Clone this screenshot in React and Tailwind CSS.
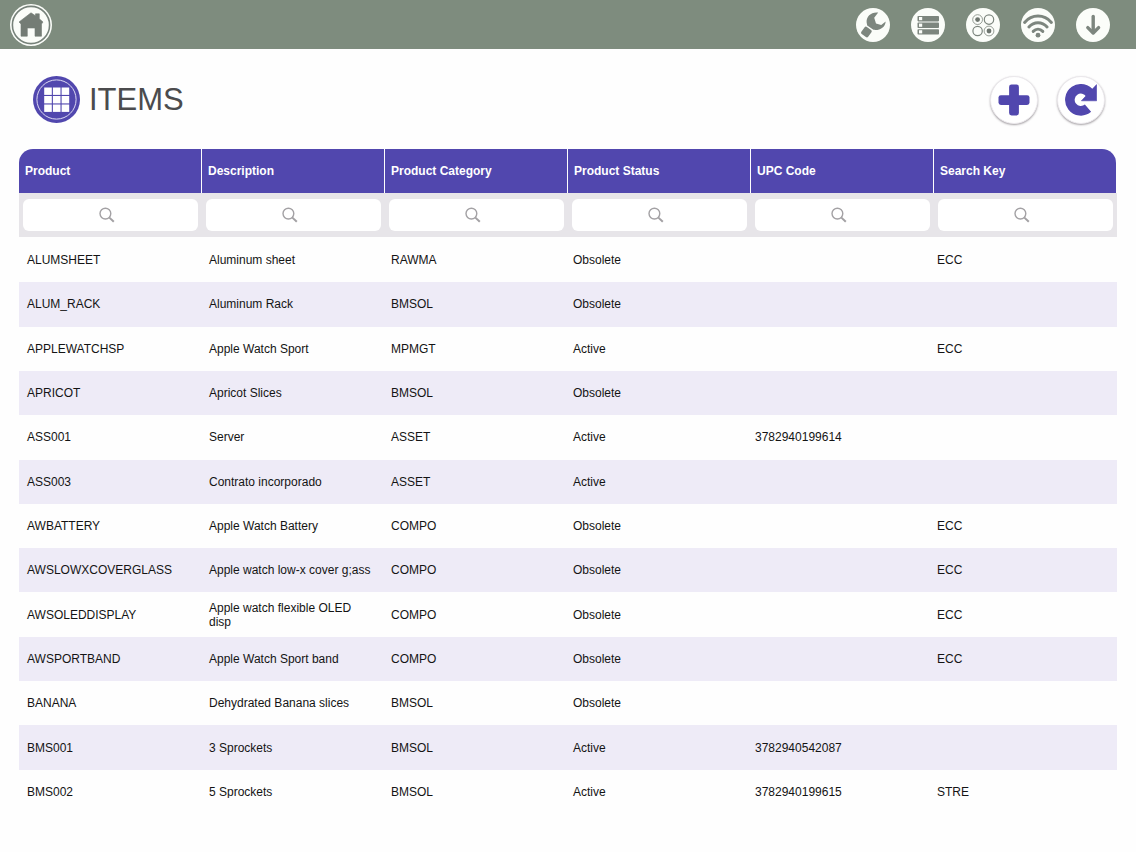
import React, { useState } from "react";

const columns = ["Product", "Description", "Product Category", "Product Status", "UPC Code", "Search Key"];

const items = [
  ["ALUMSHEET", "Aluminum sheet", "RAWMA", "Obsolete", "", "ECC"],
  ["ALUM_RACK", "Aluminum Rack", "BMSOL", "Obsolete", "", ""],
  ["APPLEWATCHSP", "Apple Watch Sport", "MPMGT", "Active", "", "ECC"],
  ["APRICOT", "Apricot Slices", "BMSOL", "Obsolete", "", ""],
  ["ASS001", "Server", "ASSET", "Active", "3782940199614", ""],
  ["ASS003", "Contrato incorporado", "ASSET", "Active", "", ""],
  ["AWBATTERY", "Apple Watch Battery", "COMPO", "Obsolete", "", "ECC"],
  ["AWSLOWXCOVERGLASS", "Apple watch low-x cover g;ass", "COMPO", "Obsolete", "", "ECC"],
  ["AWSOLEDDISPLAY", "Apple watch flexible OLED disp", "COMPO", "Obsolete", "", "ECC"],
  ["AWSPORTBAND", "Apple Watch Sport band", "COMPO", "Obsolete", "", "ECC"],
  ["BANANA", "Dehydrated Banana slices", "BMSOL", "Obsolete", "", ""],
  ["BMS001", "3 Sprockets", "BMSOL", "Active", "3782940542087", ""],
  ["BMS002", "5 Sprockets", "BMSOL", "Active", "3782940199615", "STRE"],
];

function HomeIcon() {
  return (
    <svg viewBox="0 0 42 42" className="size-[42px]" aria-hidden="true">
      <circle cx="21" cy="21" r="21" fill="#fbfdf9" />
      <circle cx="21" cy="21" r="18.6" fill="none" stroke="#77827a" strokeWidth="1.6" />
      <path
        d="M21 8.8 L25.5 11.8 V9.8 H29.3 V14.8 L33 18 L31.5 20 V32.2 H25 V24 H17.3 V32.2 H11 V20 L9 18 Z"
        fill="#747c75"
        stroke="#747c75"
        strokeLinejoin="round"
        strokeWidth="0.6"
      />
    </svg>
  );
}

function WrenchIcon() {
  return (
    <svg viewBox="0 0 34 34" className="size-[34px]" aria-hidden="true">
      <circle cx="17" cy="17" r="17" fill="#fbfdf9" />
      <g fill="#7d867e">
        <path d="M22.2 4.6 C15.5 3.6 10.2 8.3 10.6 14.2 L11.2 17.6 L17.4 21.8 C23.8 22.6 29 19.6 29.7 13.4 L25.2 17 L20 15.4 L18.2 9.8 Z" />
        <rect x="6.2" y="19.6" width="8.4" height="8.8" rx="1.6" transform="rotate(36 10.4 24)" />
      </g>
    </svg>
  );
}

function ServerIcon() {
  return (
    <svg viewBox="0 0 34 34" className="size-[34px]" aria-hidden="true">
      <circle cx="17" cy="17" r="17" fill="#fbfdf9" />
      {[8, 14.6, 21.2].map((y) => (
        <g key={y}>
          <rect x="6.5" y={y} width="21.5" height="5.4" rx="0.8" fill="#7d867e" />
          <rect x="8" y={y + 1} width="3.2" height="3.2" fill="#fbfdf9" />
        </g>
      ))}
    </svg>
  );
}

function ModulesIcon() {
  return (
    <svg viewBox="0 0 34 34" className="size-[34px]" aria-hidden="true">
      <circle cx="17" cy="17" r="17" fill="#fbfdf9" />
      <g fill="none" stroke="#7d867e">
        <circle cx="11.6" cy="11.6" r="4.9" strokeWidth="0.8" />
        <circle cx="23" cy="11.6" r="4.7" strokeWidth="1.2" />
        <circle cx="11.6" cy="23" r="4.7" strokeWidth="1.2" />
        <circle cx="23" cy="23" r="4.9" strokeWidth="0.8" />
      </g>
      <circle cx="11.6" cy="11.6" r="2.4" fill="#6d756e" />
      <circle cx="23" cy="23" r="2.4" fill="#6d756e" />
    </svg>
  );
}

function WifiIcon() {
  return (
    <svg viewBox="0 0 34 34" className="size-[34px]" aria-hidden="true">
      <circle cx="17" cy="17" r="17" fill="#fbfdf9" />
      <g fill="none" stroke="#7d867e" strokeWidth="3" strokeLinecap="round">
        <path d="M3.6 14.4 C11 6 23 6 30.4 14.4" />
        <path d="M7.9 19 C13 13.4 21 13.4 26.1 19" />
        <path d="M12.2 23.4 C15 20.6 19 20.6 21.8 23.4" />
      </g>
      <circle cx="17" cy="27.2" r="2.4" fill="#7d867e" />
    </svg>
  );
}

function DownloadIcon() {
  return (
    <svg viewBox="0 0 34 34" className="size-[34px]" aria-hidden="true">
      <circle cx="17" cy="17" r="17" fill="#fbfdf9" />
      <g fill="none" stroke="#7d867e" strokeWidth="3.4" strokeLinecap="round" strokeLinejoin="round">
        <path d="M17.2 8.4 V24" />
        <path d="M11.8 19.6 L17.2 25 L22.6 19.6" />
      </g>
    </svg>
  );
}

function GridIcon() {
  return (
    <svg viewBox="0 0 47 47" className="size-[47px]" aria-hidden="true">
      <circle cx="23.5" cy="23.5" r="23.5" fill="#5147ae" />
      <circle cx="23.5" cy="23.5" r="19.6" fill="none" stroke="#dcd9f2" strokeWidth="1" />
      {[11.5, 20, 28.5].map((y) =>
        [11.2, 19.9, 28.6].map((x) => (
          <rect key={`${x}-${y}`} x={x} y={y} width="7.6" height="7.4" fill="#fff" />
        ))
      )}
    </svg>
  );
}

function PlusIcon() {
  return (
    <svg viewBox="0 0 32 32" className="size-8" aria-hidden="true">
      <rect x="0.5" y="11.2" width="31" height="9.8" rx="2.4" fill="#5147ae" />
      <rect x="11.1" y="0.5" width="9.8" height="31" rx="2.4" fill="#5147ae" />
    </svg>
  );
}

function RefreshIcon() {
  return (
    <svg viewBox="0 0 32 32" className="size-8" aria-hidden="true">
      <path d="M23 24.2 A11 11 0 1 1 25.2 10" fill="none" stroke="#5147ae" strokeWidth="9.6" />
      <path d="M31.6 0.6 V16.8 H16.4 Z" fill="#5147ae" stroke="#5147ae" strokeWidth="0.6" strokeLinejoin="round" />
    </svg>
  );
}

function SearchIcon() {
  return (
    <svg viewBox="0 0 16 16" className="size-4" fill="none" stroke="#a3a1a4" aria-hidden="true">
      <circle cx="6.4" cy="6.6" r="5.4" strokeWidth="1.4" />
      <path d="M10.4 10.6 L14.8 14.8" strokeWidth="2" />
    </svg>
  );
}

const tools = [
  { label: "Settings", Icon: WrenchIcon },
  { label: "Server", Icon: ServerIcon },
  { label: "Modules", Icon: ModulesIcon },
  { label: "Connection", Icon: WifiIcon },
  { label: "Download", Icon: DownloadIcon },
];

function TopBar() {
  return (
    <header className="flex h-[49px] shrink-0 items-center justify-between bg-[#7e8c7e] pr-[26px] pl-2.5">
      <button type="button" aria-label="Home">
        <HomeIcon />
      </button>
      <nav className="flex gap-[21px]">
        {tools.map(({ label, Icon }) => (
          <button key={label} type="button" aria-label={label}>
            <Icon />
          </button>
        ))}
      </nav>
    </header>
  );
}

function RoundButton({ label, children }) {
  return (
    <button
      type="button"
      aria-label={label}
      className="flex size-12 items-center justify-center rounded-full border border-[#ebe8ec] bg-white shadow-[0_1px_2px_rgba(60,50,60,0.45)]"
    >
      {children}
    </button>
  );
}

function App() {
  const [filters, setFilters] = useState(columns.map(() => ""));

  const handleFilter = (index, value) => {
    setFilters(filters.map((f, i) => (i === index ? value : f)));
  };

  const visibleItems = items.filter((item) =>
    item.every((value, i) => value.toLowerCase().includes(filters[i].toLowerCase()))
  );

  return (
    <div className="flex h-screen flex-col bg-[#fefefe] font-['Liberation_Sans',Arial,sans-serif] text-[12px] leading-[14px] text-[#141414]">
      <TopBar />

      <div className="flex h-[100px] shrink-0 items-center justify-between pt-px pr-[31px] pl-[33px]">
        <div className="flex items-center gap-[9px]">
          <GridIcon />
          <h1 className="text-[31px] leading-10 text-[#4b4b4d]">ITEMS</h1>
        </div>
        <div className="flex gap-[19px]">
          <RoundButton label="Add item">
            <PlusIcon />
          </RoundButton>
          <RoundButton label="Refresh">
            <RefreshIcon />
          </RoundButton>
        </div>
      </div>

      <main className="mx-[19px] mb-[54px] min-h-0 flex-1 overflow-y-auto [scrollbar-width:none]">
        <table className="block w-full">
          <thead className="sticky top-0 z-10 block bg-[#fefefe]">
            <tr className="flex gap-px pr-px">
              {columns.map((name) => (
                <th
                  key={name}
                  scope="col"
                  className="flex h-11 flex-1 items-center bg-[#5147ae] px-1.5 text-left font-bold text-white first:rounded-tl-[14px] last:rounded-tr-[14px]"
                >
                  {name}
                </th>
              ))}
            </tr>
            <tr className="flex bg-[#e7e5e9]">
              {columns.map((name, i) => (
                <td key={name} className="flex h-11 flex-1 items-center px-1">
                  <label className="relative block w-full">
                    <input
                      type="text"
                      aria-label={`Filter by ${name}`}
                      value={filters[i]}
                      onChange={(e) => handleFilter(i, e.target.value)}
                      className="block h-8 w-full rounded-md bg-white px-2 outline-none"
                    />
                    {!filters[i] && (
                      <span className="pointer-events-none absolute inset-0 flex items-center justify-center pr-2">
                        <SearchIcon />
                      </span>
                    )}
                  </label>
                </td>
              ))}
            </tr>
          </thead>
          <tbody className="grid h-[577px] auto-rows-fr pt-px">
            {visibleItems.map((item) => (
              <tr key={item[0]} className="flex pr-1.5 even:bg-[#eeebf7]">
                {item.map((value, i) => (
                  <td key={columns[i]} className="flex flex-1 items-center px-2">
                    {value}
                  </td>
                ))}
              </tr>
            ))}
          </tbody>
        </table>
      </main>
    </div>
  );
}

export default App;
